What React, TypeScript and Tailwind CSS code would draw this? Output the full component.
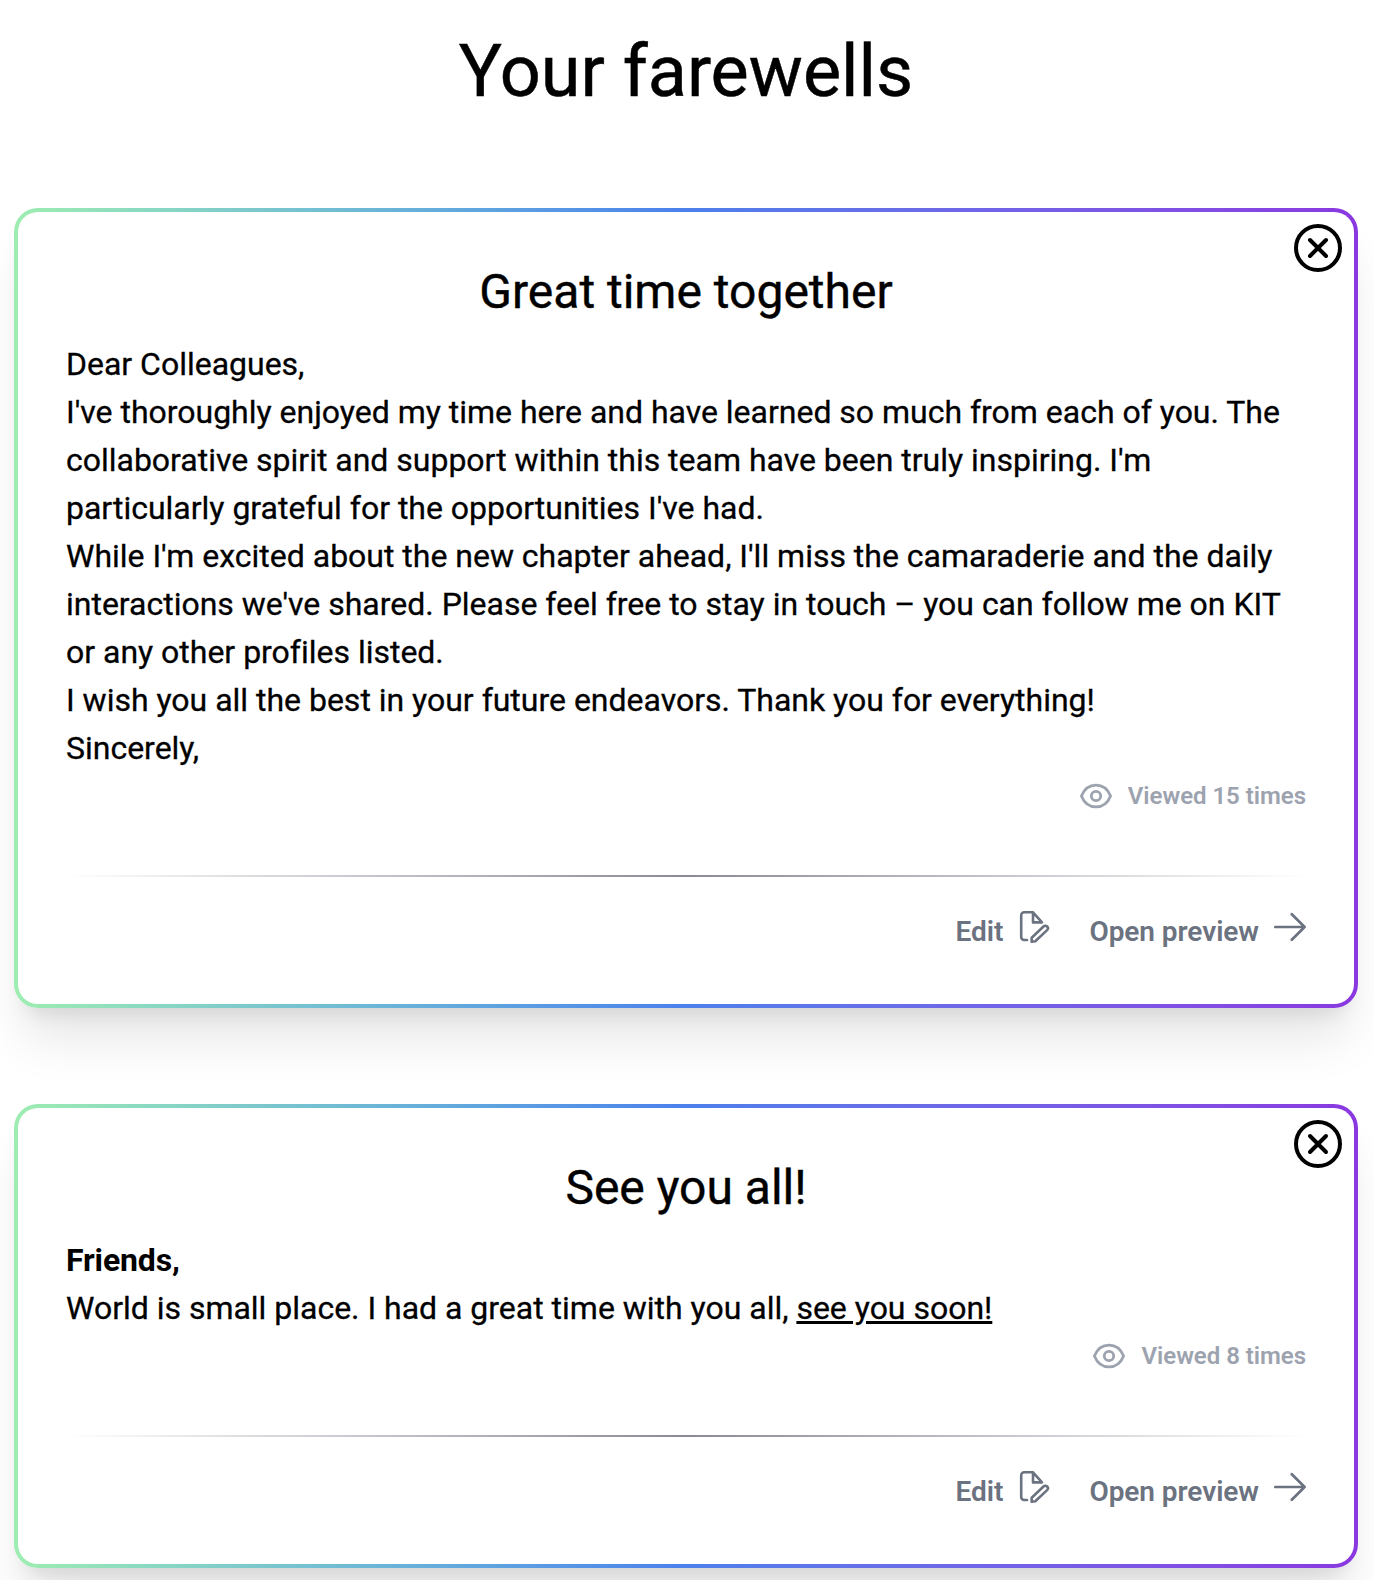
import React from 'react';

function CloseIcon() {
  return (
    <svg viewBox="0 0 48 48" className="block size-12" fill="none" stroke="currentColor" strokeWidth="4" strokeLinecap="round">
      <circle cx="24" cy="24" r="22" />
      <path d="M16 16l16 16M32 16L16 32" />
    </svg>
  );
}

function EyeIcon() {
  return (
    <svg viewBox="0 0 32 32" className="block size-8" fill="none" stroke="currentColor" strokeWidth="2.8">
      <path d="M1.400 16C4 9.500 9 5.100 16 5.100S28 9.500 30.600 16C28 22.500 23 26.900 16 26.900S4 22.500 1.400 16Z" strokeLinejoin="round" />
      <circle cx="16" cy="16" r="4.7" />
    </svg>
  );
}

function EditIcon() {
  return (
    <svg viewBox="0 0 32 32" className="block size-8" fill="none" stroke="currentColor" strokeWidth="2.6" strokeLinecap="round" strokeLinejoin="round">
      <path d="M9 29H6.200a3 3 0 0 1-3-3V4.300a3 3 0 0 1 3-3h8.800l9 10.100h-9V1.300" />
      <path d="M13.700 30.700v-3.900L25.500 15.500a2.500 2.500 0 0 1 3.600 3.600L17.300 30.200Z" />
    </svg>
  );
}

function ArrowIcon() {
  return (
    <svg viewBox="0 0 32 32" className="block size-8" fill="none" stroke="currentColor" strokeWidth="2.7" strokeLinecap="round" strokeLinejoin="round">
      <path d="M1.300 16h29.300M17.800 3.200L30.600 16 17.800 28.800" />
    </svg>
  );
}

function Card({ title, views, children }: { title: string; views: number; children: React.ReactNode }) {
  return (
    <article className="relative rounded-[24px] bg-linear-to-r from-[#9eedb0] via-[#4c80ec] to-[#8a38e0] p-1 shadow-[0_40px_50px_-10px_rgba(0,0,0,0.1),0_16px_20px_-12px_rgba(0,0,0,0.1)]">
      <button aria-label="Delete" className="absolute top-4 right-4">
        <CloseIcon />
      </button>
      <div className="rounded-[20px] bg-white p-12">
        <h2 className="mb-4 text-center text-[48px] leading-[64px] [-webkit-text-stroke:0.4px_currentColor]">{title}</h2>
        <div className="text-[32px] leading-[48px] tracking-[-0.012px] [-webkit-text-stroke:0.3px_currentColor]">{children}</div>
        <div className="flex h-12 items-center justify-end gap-4 text-[24px] leading-[32px] font-semibold tracking-[-0.03px] text-[#9ca3af]">
          <EyeIcon />
          <span>Viewed {views} times</span>
        </div>
        <div className="mt-[55px] h-0.5 bg-linear-to-r from-transparent via-[#898a96] to-transparent" />
        <div className="mt-[34px] flex h-[45px] justify-end gap-[39px] text-[28px] leading-[42px] font-semibold tracking-[-0.05px] text-[#6b7280]">
          <button className="flex gap-[15px]">
            <span>Edit</span>
            <EditIcon />
          </button>
          <button className="flex gap-[15px]">
            <span>Open preview</span>
            <ArrowIcon />
          </button>
        </div>
      </div>
    </article>
  );
}

export default function App() {
  return (
    <main className="h-[1580px] overflow-hidden bg-white pr-4 pl-[14px] font-['Roboto',sans-serif] text-black">
      <h1 className="h-[208px] pt-9 text-center text-[72px] leading-[72px] [-webkit-text-stroke:0.5px_currentColor]">Your farewells</h1>
      <div className="flex flex-col gap-24">
        <Card title="Great time together" views={15}>
          <p>Dear Colleagues,</p>
          <p>I've thoroughly enjoyed my time here and have learned so much from each of you. The collaborative spirit and support within this team have been truly inspiring. I'm particularly grateful for the opportunities I've had.</p>
          <p>While I'm excited about the new chapter ahead, I'll miss the camaraderie and the daily interactions we've shared. Please feel free to stay in touch – you can follow me on KIT or any other profiles listed.</p>
          <p>I wish you all the best in your future endeavors. Thank you for everything!</p>
          <p>Sincerely,</p>
        </Card>
        <Card title="See you all!" views={8}>
          <p className="font-bold tracking-[-0.15px] [-webkit-text-stroke:0px]">Friends,</p>
          <p>World is small place. I had a great time with you all, <u>see you soon!</u></p>
        </Card>
      </div>
    </main>
  );
}
